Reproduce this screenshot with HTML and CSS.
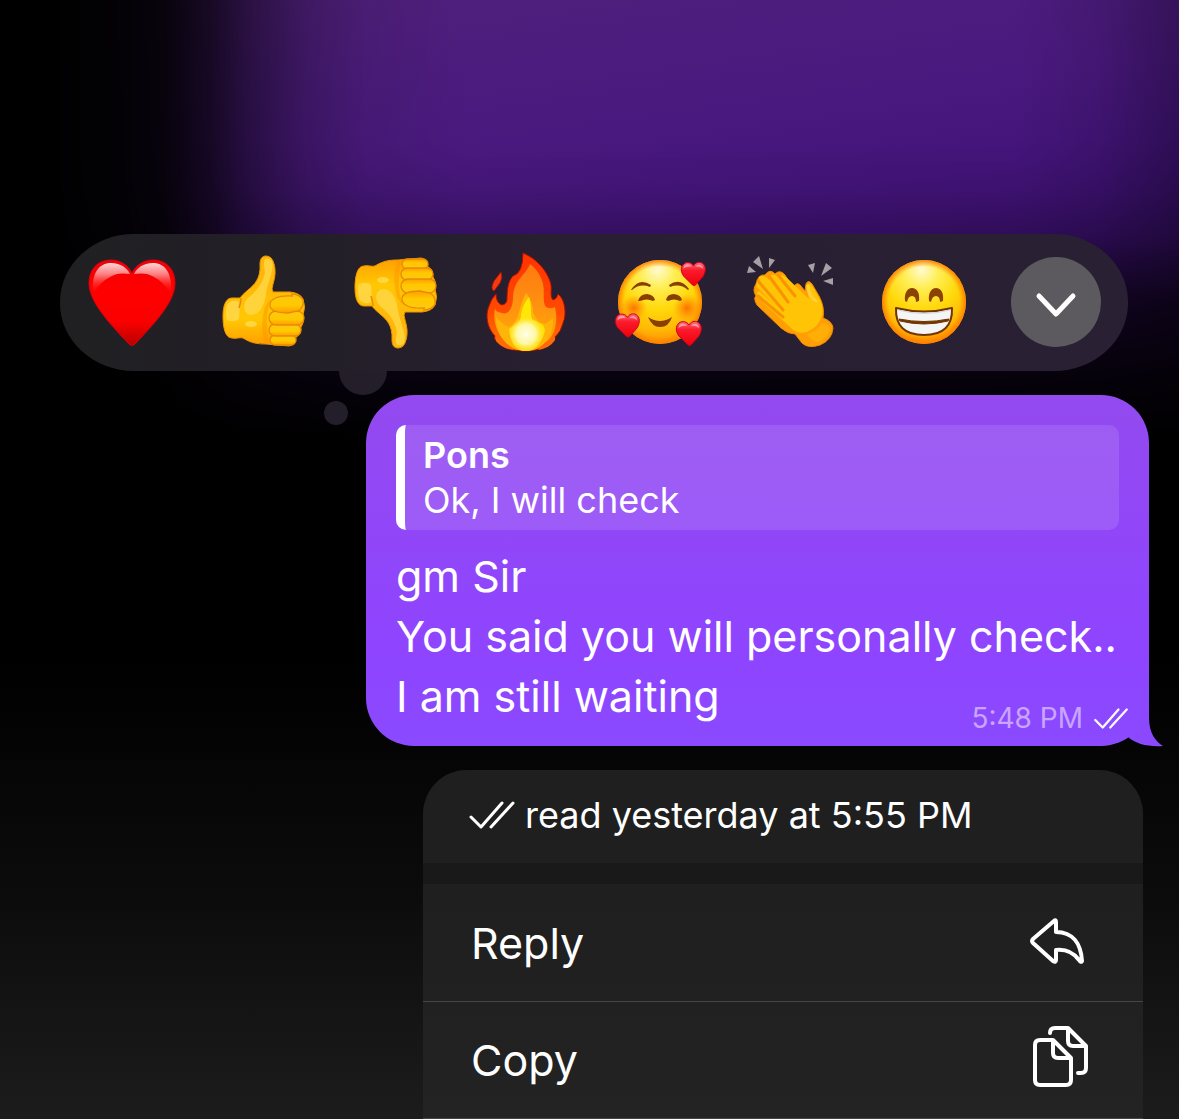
FILE: index.html
```html
<!DOCTYPE html>
<html lang="en">
<head>
<meta charset="utf-8">
<meta name="viewport" content="width=device-width, initial-scale=1">
<title>Message actions</title>
<link rel="stylesheet" href="styles.css">
</head>
<body>
<svg class="defs" width="0" height="0" aria-hidden="true">
  <defs>
    <radialGradient id="face" cx=".47" cy=".12" r=".95">
      <stop offset="0" stop-color="#fffbd0"/><stop offset=".22" stop-color="#ffee55"/><stop offset=".5" stop-color="#ffd80a"/><stop offset=".75" stop-color="#ffb806"/><stop offset="1" stop-color="#ff7a00"/>
    </radialGradient>
    <radialGradient id="rim" cx=".5" cy=".5" r=".5">
      <stop offset=".84" stop-color="#ff8a00" stop-opacity="0"/><stop offset="1" stop-color="#ff7d00" stop-opacity=".95"/>
    </radialGradient>
    <radialGradient id="blush"><stop offset="0" stop-color="#ff5a00" stop-opacity=".8"/><stop offset="1" stop-color="#ff7a00" stop-opacity="0"/></radialGradient>
    <linearGradient id="shine" x1="0" y1="0" x2="0" y2="1"><stop offset="0" stop-color="#ffd8d8"/><stop offset=".35" stop-color="#ffa0a0" stop-opacity=".8"/><stop offset="1" stop-color="#ff0000" stop-opacity="0"/></linearGradient>
    <linearGradient id="heartfill" x1="0" y1="0" x2="0" y2="1"><stop offset="0" stop-color="#ec0008"/><stop offset=".3" stop-color="#ff0000"/><stop offset=".72" stop-color="#fb0000"/><stop offset="1" stop-color="#b80000"/></linearGradient>
    <linearGradient id="minifill" x1="0" y1="0" x2="0" y2="1"><stop offset="0" stop-color="#ff6a78"/><stop offset=".35" stop-color="#fb1a2c"/><stop offset="1" stop-color="#f0000a"/></linearGradient>
    <linearGradient id="skin" x1="0" y1="0" x2="0" y2="1"><stop offset="0" stop-color="#ffb60a"/><stop offset=".35" stop-color="#ffb808"/><stop offset=".7" stop-color="#ffc803"/><stop offset="1" stop-color="#ff9d00"/></linearGradient>
    <linearGradient id="finger" x1="0" y1="0" x2="0" y2="1"><stop offset="0" stop-color="#ffc810"/><stop offset=".6" stop-color="#ffc800"/><stop offset="1" stop-color="#ff9c00"/></linearGradient>
    <linearGradient id="flame" x1="0" y1="0" x2="0" y2="1"><stop offset="0" stop-color="#ff3300"/><stop offset=".6" stop-color="#ff4a00"/><stop offset="1" stop-color="#ff7a00"/></linearGradient>
    <linearGradient id="flame2" x1="0" y1="0" x2="0" y2="1"><stop offset="0" stop-color="#ff7a10"/><stop offset=".5" stop-color="#ff9210"/><stop offset="1" stop-color="#ffb000"/></linearGradient>
    <linearGradient id="flame3" x1="0" y1="0" x2="0" y2="1"><stop offset="0" stop-color="#ffea00"/><stop offset="1" stop-color="#ffdd10"/></linearGradient>
    <radialGradient id="core"><stop offset="0" stop-color="#ffffea"/><stop offset=".6" stop-color="#fff7a0"/><stop offset="1" stop-color="#ffea50" stop-opacity="0"/></radialGradient>
    <symbol id="mini" viewBox="0 0 26 26" overflow="visible">
      <path d="M13 5C11 1.500 6 .5 3 3C-1 6.500 0 12 3 16L12 25Q14 26.500 15.500 24.500L23 16C26 11 26.500 5 22 2.200C18.500 .2 14.500 2 13 5Z" fill="url(#minifill)" stroke="#c8001c" stroke-width="1"/>
      <path d="M2.500 8Q3 3.500 7 3.500Q10 3.500 11 6Q6 5 2.500 8ZM15 6Q17 3.200 20 3.800Q23 5 23 8Q19 5 15 6Z" fill="#ffb0b8" opacity=".8"/>
    </symbol>
    <symbol id="thumb" viewBox="0 0 90 90" overflow="visible">
      <path d="M47-1C43-1 41 2 41 7C42 22 35 28 29 33Q23 38 21 41Q18 41 13 41C7 41 4 48 4 59C4 70 6 81 13 81C17 82 21 80 24 81C32 86 38 87 47 87L70 89Q77 88 77 80Q82 78 82 70Q86 65 84 58Q87 50 84 42Q81 36 71 35L54 35Q52 33 54 27C56 20 57 14 55 7Q53-1 47-1Z" fill="url(#skin)" stroke="#f29400" stroke-width="1"/>
      <path d="M47 2C45 2 44 6 46 15C44 28 35 36 29 41C23 47 24 57 32 58C42 58 46 46 47 37C49 24 56 12 53 4Q50 1 47 2Z" fill="#ffd540" opacity=".9"/>
      <path d="M8 48Q11 43 18 44Q21 44 21 50L20 62Q16 66 8 63Q6 57 8 48Z" fill="#ffd850" opacity=".8"/>
      <path d="M22 41Q22 45 20 51" fill="none" stroke="#e98b00" stroke-width="1.500"/>
      <ellipse cx="32" cy="67" rx="6" ry="3" fill="#ffe05a" opacity=".7"/>
      <path d="M52 41Q45 58 50 86L46 86Q40 70 46 50Z" fill="#ff9400" opacity=".5"/>
      <g fill="url(#finger)" stroke="#e88a00" stroke-width="1.300">
        <rect x="51" y="78" width="26" height="10" rx="5"/><rect x="50" y="67" width="32" height="12" rx="6"/><rect x="50" y="54" width="35" height="14" rx="7"/><path d="M74 39C59 38 50 42 51 49C52 55 60 56 69 56L79 54Q85 51 84 43Q81 37 72 37"/>
      </g>
    </symbol>
  </defs>
</svg>

<main class="screen">
  <div class="reactions" role="toolbar" aria-label="Reactions">
    <button class="reaction" type="button" aria-label="Heart">
      <svg viewBox="0 0 90 90"><path d="M45 16C41 8 33 3 24 3C10 3 2 13 2 26C2 43 18 62 42 87Q45 90 48 87C72 62 88 43 88 26C88 13 80 3 66 3C57 3 49 8 45 16Z" fill="url(#heartfill)" stroke="#d8000c" stroke-width="1"/><path d="M6 38C4 16 12 6 24 6C34 6 40 11 43 17C36 16 30 16 25 19C16 23 10 30 6 38ZM84 38C86 16 78 6 66 6C56 6 50 11 47 17C54 16 60 16 65 19C74 23 80 30 84 38Z" fill="url(#shine)"/></svg>
    </button>
    <button class="reaction" type="button" aria-label="Thumbs up"><svg viewBox="0 0 90 90"><use href="#thumb" width="90" height="90"/></svg></button>
    <button class="reaction" type="button" aria-label="Thumbs down"><svg viewBox="0 0 90 90"><use href="#thumb" width="90" height="90" transform="translate(0 90) scale(1 -1)"/></svg></button>
    <button class="reaction" type="button" aria-label="Fire">
      <svg viewBox="0 0 90 90">
        <path d="M40-4C54 2 63 13 67 24C70 32 66 38 70 43Q74 42 75 37C82 42 84 57 80 66Q78 75 72 80Q73 83 68 87C56 96 29 96 17 88Q10 82 12 79C4 71 2 58 6 49Q8 42 13 37Q13 46 19 48Q24 47 24 42C24 30 26 23 30 19Q40 16 40-4Z" fill="url(#flame)" stroke="#b01000" stroke-width="1"/>
        <path d="M18 15Q20 21 17 26L11 34Q7 32 11 24Z" fill="#f63a10" stroke="#b01000" stroke-width=".8"/>
        <path d="M47 7C43 18 31 22 30 40C30 52 25 58 19 56Q12 55 12 51C10 62 12 72 20 82Q30 93 43 93Q60 92 68 80Q76 68 72 50Q66 53 62 49C59 40 63 32 58 21Q54 12 47 7Z" fill="url(#flame2)"/>
        <path d="M13 80Q24 84 31 93Q20 92 13 84ZM72 80Q61 84 55 93Q67 91 72 83Z" fill="#ff6a08"/>
        <path d="M13 60Q19 67 25 70Q34 67 36 55Q38 46 43 36Q50 45 50 55Q54 67 63 67L70 61C71 78 60 94 43 94C26 94 13 80 13 60Z" fill="#ffb408"/>
        <path d="M46 40C49 48 47 55 49 62L60 68L62 73C60 84 53 94 43 94C32 94 28 86 26 72L35 66Q38 63 38 57Q40 47 46 40Z" fill="url(#flame3)"/>
        <circle cx="43" cy="77" r="17" fill="url(#core)"/>
      </svg>
    </button>
    <button class="reaction" type="button" aria-label="Smiling face with hearts">
      <svg viewBox="0 0 90 90"><circle cx="45" cy="45" r="42" fill="url(#face)"/><circle cx="45" cy="45" r="42" fill="url(#rim)"/><circle cx="19" cy="51" r="13" fill="url(#blush)"/><circle cx="72" cy="51" r="14" fill="url(#blush)"/>
        <g fill="#874000"><path d="M16 33Q24 20 36 28L35 30Q25 26 17 33ZM54 28Q65 20 74 32L73 33Q65 26 55 30ZM23 44Q25 37 32 37Q39 38 40 43L38 44Q32 41 25 44ZM51 43Q52 37 59 37Q66 38 67 43L65 44Q59 41 53 44ZM33 60Q45 68 57 60Q54 70 45 70Q37 70 33 60Z"/></g>
        <use href="#mini" x="66" y="4" width="25" height="25"/><use href="#mini" x="0" y="55" width="25" height="26"/><use href="#mini" x="61" y="63" width="26" height="26"/>
      </svg>
    </button>
    <button class="reaction" type="button" aria-label="Clapping hands">
      <svg viewBox="0 0 90 90">
        <path d="M0 16L2 9L9 15ZM6 5L12-1L16 12ZM22 1L28 3L22 11ZM61 8L68 6L66 16ZM79 6L85 11L74 19ZM76 24L86 21L86 28Z" fill="#a5a1a3"/>
        <path d="M46 32Q49 24 53 28L58 34L59 27Q61 22 65 27L72 39Q78 50 76 61Q85 64 86 71Q85 83 73 88Q61 92 55 86L48 77Q41 77 34 71L10 48Q6 41 9 39Q5 33 9 27Q11 17 18 18Q23 11 28 17Q33 12 38 18Z" fill="#ff9f05" stroke="#f08c00" stroke-width="1"/>
        <path d="M12 20Q17 17 22 23L24 18Q28 16 32 21Q34 16 39 20L62 42L59 29Q62 24 66 30C72 41 77 47 75 58Q73 69 60 75Q50 78 43 70L11 41Q8 37 12 34L27 47L10 30Q8 25 13 24Z" fill="#ffc405"/>
        <path d="M11 39L36 60M12 25L36 53M22 19L41 45M31 18L48 39" fill="none" stroke="#f99300" stroke-width="3" stroke-linecap="round"/>
        <path d="M75 66Q83 67 83 73Q79 84 70 85Q63 83 60 77Q70 74 75 66Z" fill="#ffae08"/><path d="M61 29Q62 40 69 44" fill="none" stroke="#ffdc60" stroke-width="3" stroke-linecap="round" opacity=".6"/>
      </svg>
    </button>
    <button class="reaction" type="button" aria-label="Beaming face">
      <svg viewBox="0 0 90 90"><circle cx="45" cy="45" r="42" fill="url(#face)"/><circle cx="45" cy="45" r="42" fill="url(#rim)"/>
        <path d="M26 44C25 35 29 31 33 31C38 31 41 36 40 44L37 45Q37 39 33 39Q29 39 28 45ZM50 44C49 35 53 31 57 31C62 31 65 36 64 44L61 45Q61 39 57 39Q53 39 52 45Z" fill="#8c4200"/>
        <path d="M17 51Q45 58 73 51Q74 78 45 78Q16 78 17 51Z" fill="#f5f5f5" stroke="#713500" stroke-width="2" stroke-linejoin="round"/><path d="M20 62Q45 67 70 62L69 64Q45 70 21 64Z" fill="#713500" stroke="#713500" stroke-width="1"/><path d="M19 53Q45 60 71 53" fill="none" stroke="#ccd5dc" stroke-width="1"/>
      </svg>
    </button>
    <button class="reaction reaction-more" type="button" aria-label="More reactions"><svg viewBox="0 0 90 90"><path d="M28 39L45 57L62 39" fill="none" stroke="#fff" stroke-width="5" stroke-linecap="round" stroke-linejoin="round"/></svg></button>
  </div>

  <article class="bubble">
    <blockquote class="quote">
      <cite class="quote-name">Pons</cite>
      <p class="quote-text">Ok, I will check</p>
    </blockquote>
    <p class="message">gm Sir<br>You said you will personally check..<br>I am still waiting</p>
    <footer class="meta"><time>5:48 PM</time><svg class="ticks-small" viewBox="0 0 46 28"><path d="M2 16L12 26L33 2M22 26L44 2"/></svg></footer>
    <svg class="tail" viewBox="0 0 40 60" aria-hidden="true"><path d="M26 0V32C26 47 33 56 40 60C25 61 13 58 5 51L0 38L12 20Z" fill="#8b48ff"/></svg>
  </article>

  <section class="menu" aria-label="Message menu">
    <p class="receipt"><svg class="ticks" viewBox="0 0 46 28"><path d="M2 16L12 26L33 2M22 26L44 2"/></svg>read yesterday at 5:55 PM</p>
    <ul class="actions">
      <li><button class="action" type="button">Reply<svg class="icon" viewBox="0 0 60 60"><path d="M4 26L25 8Q27 6 27 9V19C44 19 52 31 53 48Q52 50 50 47C44 39 37 36 27 37V47Q27 50 24 48L4 30Q2 28 4 26Z"/></svg></button></li>
      <li><button class="action" type="button">Copy<svg class="icon" viewBox="0 0 60 60"><path d="M11 10H24L42 28V50Q42 55 37 55H11Q6 55 6 50V15Q6 10 11 10ZM24 10V23Q24 28 29 28H42M21 3Q21-2 26-2H39L57 16V38Q57 43 52 43H49M39-2V11Q39 16 44 16H57"/></svg></button></li>
    </ul>
  </section>
</main>
</body>
</html>
```
FILE: styles.css
```css
* { box-sizing: border-box; }

body {
  margin: 0;
  color: #fff;
  background: #000;
  font-family: Inter, "Liberation Sans", sans-serif;
}

p, ul, blockquote { margin: 0; padding: 0; }
ul { list-style: none; }
button { font: inherit; color: inherit; border: 0; padding: 0; background: none; cursor: pointer; }
svg { display: block; overflow: visible; }
.defs { position: absolute; }

.screen {
  position: relative;
  isolation: isolate;
  display: flex;
  flex-direction: column;
  gap: 24px;
  min-height: 100vh;
  padding-top: 234px;
  background: linear-gradient(#000 660px, #050506 760px, #0c0c0d 900px, #1c1c1c 1119px);
}

/* Blurred purple glow behind the reaction bar */
.screen::before {
  content: "";
  position: absolute;
  z-index: -1;
  inset: 0 0 auto;
  height: 440px;
  background: linear-gradient(172deg, #52227c, #4d1d7e 20%, #4a197f 36%, #43147a 50%, #3c1070 62%, #2a0a50);
  mask-image:
    linear-gradient(90deg, transparent 2%, rgba(0, 0, 0, .03) 9%, rgba(0, 0, 0, .1) 14%, rgba(0, 0, 0, .3) 18%, rgba(0, 0, 0, .52) 21%, rgba(0, 0, 0, .78) 26%, rgba(0, 0, 0, .92) 31%, #000 40%, #000 86%, rgba(0, 0, 0, .9) 93%, rgba(0, 0, 0, .7)),
    linear-gradient(#000 140px, rgba(0, 0, 0, .94) 190px, rgba(0, 0, 0, .8) 235px, rgba(0, 0, 0, .35) 300px, rgba(0, 0, 0, .15) 370px, transparent);
  mask-composite: intersect;
}

.reactions {
  position: relative;
  display: flex;
  align-items: flex-start;
  justify-content: space-between;
  margin: 0 51px 0 60px;
  padding: 23px 27px 24px;
  border-radius: 74px / 68px;
  background: linear-gradient(90deg, #202022, #231f28 25%, #291f33 50%, #2a2033);
}

.reactions::before, .reactions::after {
  content: "";
  position: absolute;
  background: #231e2a;
}
.reactions::before { left: 279px; top: 100%; width: 48px; height: 24px; border-radius: 0 0 24px 24px; }
.reactions::after { left: 264px; top: 167px; width: 24px; height: 24px; border-radius: 50%; }

.reaction { width: 90px; height: 90px; border-radius: 50%; }
.reaction-more { background: #5c5a5e; }

.bubble {
  position: relative;
  margin: 0 30px 0 366px;
  padding: 30px 30px 20px;
  border-radius: 48px;
  background: linear-gradient(#934aef, #9046fa 50%, #8f44ff 72%, #8a4aff);
}

.quote {
  padding: 8px 18px 7px;
  border-left: 9px solid #fff;
  border-radius: 10px;
  background: rgba(255, 255, 255, .11);
  font-size: 36px;
  line-height: 45px;
}
.quote-name { display: block; font-style: normal; font-weight: 600; }

.message { margin-top: 16px; font-size: 43px; line-height: 60px; white-space: nowrap; }

.meta {
  position: absolute;
  right: 20px;
  bottom: 12px;
  display: flex;
  align-items: center;
  gap: 10px;
  font-size: 28px;
  line-height: 32px;
  color: #c9a5ff;
}

.ticks, .ticks-small { flex: none; fill: none; stroke: #fff; stroke-width: 3; stroke-linecap: round; stroke-linejoin: round; }
.ticks { width: 46px; height: 28px; }
.ticks-small { width: 36px; height: 21px; }
.tail { position: absolute; right: -14px; bottom: 0; width: 40px; height: 60px; }

.menu {
  flex: 1;
  margin: 0 36px 0 423px;
  border-radius: 44px 44px 0 0;
  overflow: hidden;
  background: #191919;
}

.receipt {
  display: flex;
  align-items: center;
  gap: 10px;
  padding: 22px 46px 25px;
  background: #1f1f1f;
  font-size: 36px;
  line-height: 46px;
}

.actions { margin-top: 21px; background: linear-gradient(#1f1f1f, #232323); }

.action {
  display: flex;
  align-items: center;
  justify-content: space-between;
  width: 100%;
  height: 117px;
  padding: 0 54px 0 48px;
  border-bottom: 1px solid #464646;
  font-size: 43px;
  text-align: left;
}
.actions li:first-child .action { height: 118px; }

.icon { width: 60px; height: 60px; fill: none; stroke: #fff; stroke-width: 4; stroke-linecap: round; stroke-linejoin: round; }
```
